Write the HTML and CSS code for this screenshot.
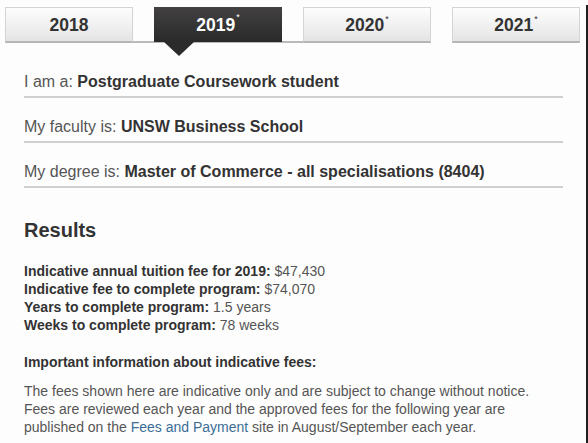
FILE: index.html
```html
<!DOCTYPE html>
<html>
<head>
<meta charset="utf-8">
<link rel="stylesheet" href="styles.css">
</head>
<body>
<div class="frame">
  <div class="tabs">
    <div class="tab">2018</div>
    <div class="tab tab-active">2019<sup>*</sup><span class="pointer"></span></div>
    <div class="tab">2020<sup>*</sup></div>
    <div class="tab">2021<sup>*</sup></div>
  </div>
  <div class="content">
    <div class="rows">
      <div class="row">I am a: <b>Postgraduate Coursework student</b></div>
      <div class="row">My faculty is: <b>UNSW Business School</b></div>
      <div class="row">My degree is: <b>Master of Commerce - all specialisations (8404)</b></div>
    </div>
    <h2 class="results-title">Results</h2>
    <div class="facts">
      <div><b>Indicative annual tuition fee for 2019:</b> $47,430</div>
      <div><b>Indicative fee to complete program:</b> $74,070</div>
      <div><b>Years to complete program:</b> 1.5 years</div>
      <div><b>Weeks to complete program:</b> 78 weeks</div>
    </div>
    <div class="note-title">Important information about indicative fees:</div>
    <p class="note">The fees shown here are indicative only and are subject to change without notice. Fees are reviewed each year and the approved fees for the following year are published on the <a class="link" href="#">Fees and Payment</a> site in August/September each year.</p>
  </div>
</div>
</body>
</html>
```
FILE: styles.css
```css
html, body {
  margin: 0;
  padding: 0;
  background: #fefdfd;
}
body {
  font-family: "Liberation Sans", Arial, sans-serif;
  color: #555;
  height: 443px;
  overflow: hidden;
}
.frame {
  width: 586px;
  margin-top: 5px;
  height: 438px;
  border-right: 2px solid #1e1e1e;
}
.tabs {
  position: relative;
  display: flex;
  gap: 21px;
  padding: 2px 0 0 5px;
}
.tabs::after {
  content: "";
  position: absolute;
  left: 5px;
  width: 298px;
  bottom: 0;
  height: 2px;
  background: #b9b9b9;
}
.tab {
  position: relative;
  z-index: 1;
  box-sizing: border-box;
  width: 128px;
  height: 36px;
  border: 1px solid #d4d4d4;
  border-bottom: 2px solid #b5b5b5;
  background: linear-gradient(#fdfdfd, #ececec 70%, #e4e4e4);
  font-weight: bold;
  font-size: 17.5px;
  color: #333;
  display: flex;
  align-items: center;
  justify-content: center;
  padding-top: 1px;
}
.tab sup {
  font-size: 9px;
  font-weight: normal;
  align-self: flex-start;
  margin-top: 6px;
  margin-left: 1px;
  line-height: 1;
}
.tab-active {
  background: linear-gradient(#434141, #343333 60%, #2a2a2a);
  border: none;
  height: 35px;
  color: #fff;
}
.tab-active sup {
  color: #fff;
  margin-top: 5px;
}
.pointer {
  position: absolute;
  left: 10px;
  top: 100%;
  width: 0;
  height: 0;
  border-left: 15px solid transparent;
  border-right: 15px solid transparent;
  border-top: 14px solid #2b2b2b;
}
.content {
  padding: 10px 0 0 24px;
}
.rows {
  width: 539px;
}
.row {
  font-size: 16px;
  line-height: 20px;
  padding: 19px 0 4px;
  border-bottom: 2px solid #cfcfcf;
  color: #555;
}
.row b {
  color: #333;
}
.results-title {
  margin: 30px 0 0;
  font-size: 20px;
  line-height: 24px;
  color: #333;
}
.facts {
  margin-top: 20px;
  font-size: 14px;
  line-height: 18px;
}
.facts b {
  color: #333;
}
.note-title {
  margin-top: 19px;
  font-size: 14px;
  line-height: 18px;
  font-weight: bold;
  color: #333;
}
.note {
  margin: 11px 0 0;
  width: 515px;
  font-size: 14px;
  line-height: 18px;
  color: #555;
}
.link {
  color: #3a6e96;
  text-decoration: none;
}
```
